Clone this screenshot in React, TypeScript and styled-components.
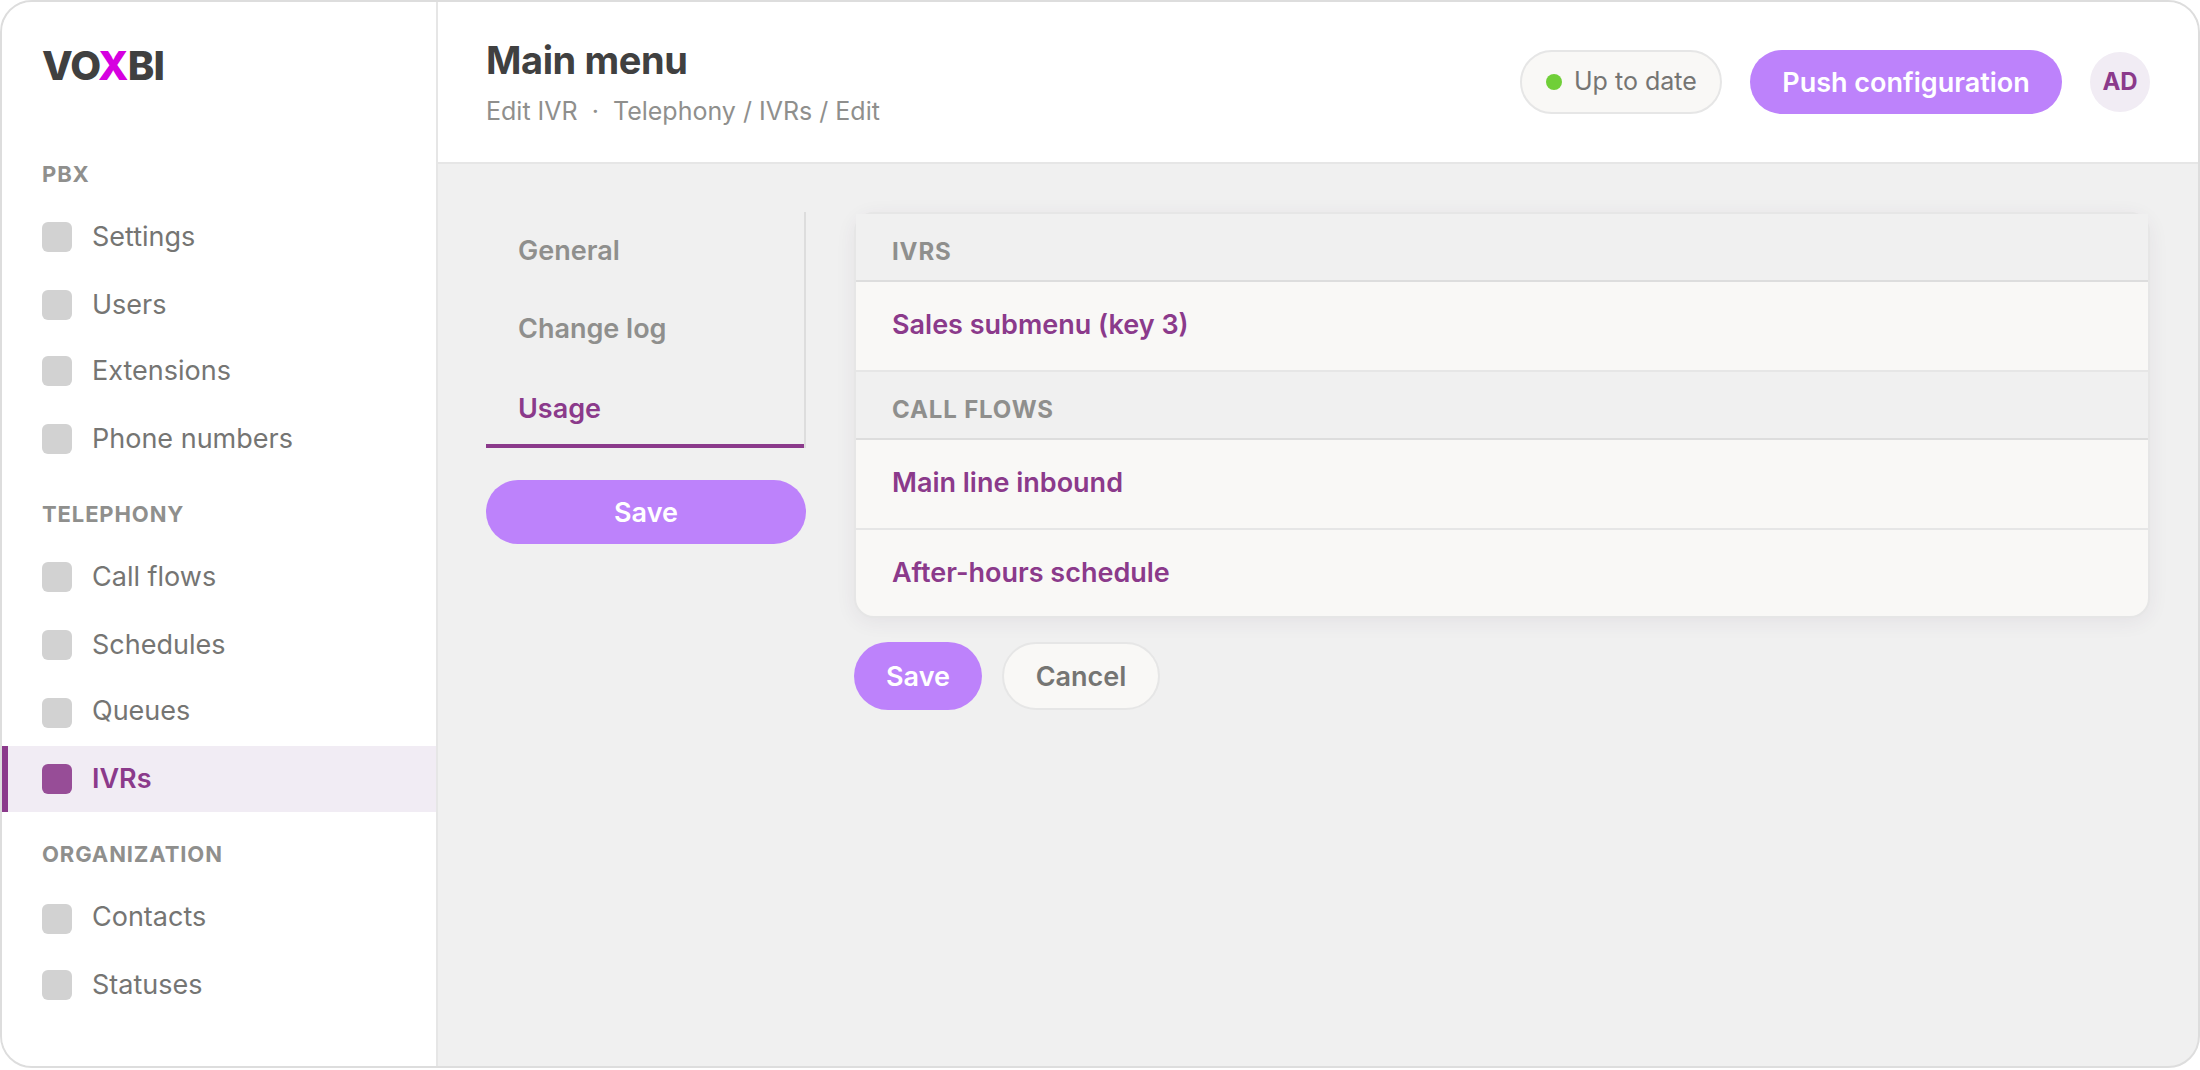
import React from "react";
import styled, { createGlobalStyle, css } from "styled-components";

const color = {
  text: "#404040",
  body: "#757573",
  muted: "#8f8f8d",
  accent: "#8b3a8b",
  accentSoft: "#f1ecf4",
  primary: "#bd82fb",
  magenta: "#d600e0",
  canvas: "#f0f0f0",
  surface: "#f9f8f6",
  line: "#dddddd",
  lineSoft: "#e6e6e6",
  green: "#70cf38",
};

const GlobalStyle = createGlobalStyle`
  *, *::before, *::after { box-sizing: border-box; }
  body {
    margin: 0;
    background: #fff;
    font-family: Inter, "Liberation Sans", sans-serif;
  }
  button { font-family: inherit; }
`;

const Frame = styled.div`
  display: flex;
  width: 2200px;
  height: 1068px;
  border: 2px solid ${color.line};
  border-radius: 32px;
  background: ${color.canvas};
  overflow: hidden;
`;

/* ---------- Sidebar ---------- */

const Sidebar = styled.aside`
  flex: none;
  width: 436px;
  border-right: 2px solid ${color.lineSoft};
  background: #fff;
`;

const Logo = styled.div`
  height: 130px;
  padding: 39px 40px 0;
  font-size: 40px;
  font-weight: 800;
  line-height: 49px;
  letter-spacing: -0.02em;
  color: ${color.text};
`;

const LogoMark = styled.span`
  color: ${color.magenta};
`;

const NavHeading = styled.h2`
  height: 72px;
  margin: 0;
  padding: 29px 40px 0;
  font-size: 22px;
  font-weight: 700;
  line-height: 26px;
  letter-spacing: 0.04em;
  text-transform: uppercase;
  color: ${color.muted};
`;

const NavList = styled.ul`
  margin: 0;
  padding: 0;
  list-style: none;
`;

const NavIcon = styled.span<{ $drop?: boolean }>`
  flex: none;
  width: 30px;
  height: 30px;
  margin-top: ${(p) => (p.$drop ? 20 : 18)}px;
  border-radius: 6px;
  background: #d2d2d2;
`;

const NavItem = styled.li<{ $active?: boolean }>`
  display: flex;
  align-items: flex-start;
  gap: 20px;
  height: 68px;
  padding-left: 40px;
  font-size: 27px;
  line-height: 33px;
  color: ${color.body};

  &:nth-child(even) {
    height: 66px;
  }

  ${(p) =>
    p.$active &&
    css`
      padding-left: 34px;
      border-left: 6px solid ${color.accent};
      background: ${color.accentSoft};
      color: ${color.accent};
      font-weight: 600;

      ${NavIcon} {
        background: #974d97;
      }
    `}
`;

const NavLabel = styled.span`
  padding-top: 16px;
`;

/* ---------- Main column ---------- */

const Main = styled.main`
  flex: 1;
  min-width: 0;
`;

const Header = styled.header`
  display: flex;
  align-items: center;
  justify-content: space-between;
  height: 162px;
  padding: 0 48px;
  border-bottom: 2px solid ${color.lineSoft};
  background: #fff;
`;

const TitleBlock = styled.div`
  align-self: flex-start;
  display: flex;
  flex-direction: column;
  gap: 13px;
  padding-top: 35px;
`;

const Title = styled.h1`
  margin: 0;
  font-size: 38px;
  font-weight: 700;
  line-height: 46px;
  letter-spacing: -0.01em;
  color: ${color.text};
`;

const Crumbs = styled.div`
  font-size: 25px;
  line-height: 30px;
  color: ${color.muted};
`;

const HeaderActions = styled.div`
  display: flex;
  align-items: center;
  gap: 28px;
`;

const StatusPill = styled.div`
  display: flex;
  align-items: center;
  gap: 12px;
  width: 202px;
  height: 64px;
  padding-left: 24px;
  border: 2px solid ${color.lineSoft};
  border-radius: 32px;
  background: ${color.surface};
  font-size: 25px;
  line-height: 30px;
  color: ${color.body};
  white-space: nowrap;

  span {
    padding-bottom: 2px;
  }
`;

const StatusDot = styled.i`
  flex: none;
  width: 16px;
  height: 16px;
  border-radius: 50%;
  background: ${color.green};
`;

const Avatar = styled.div`
  width: 60px;
  height: 60px;
  padding-top: 15px;
  border-radius: 50%;
  background: ${color.accentSoft};
  font-size: 24px;
  font-weight: 700;
  line-height: 29px;
  text-align: center;
  color: ${color.accent};
`;

const Button = styled.button<{ $variant?: "primary" | "ghost"; $tall?: boolean; $width?: string }>`
  flex: none;
  display: block;
  width: ${(p) => p.$width ?? "auto"};
  height: ${(p) => (p.$tall ? 68 : 64)}px;
  padding: ${(p) => (p.$tall ? "18px 0 17px" : "16px 0 15px")};
  border: 0;
  border-radius: 34px;
  background: ${color.primary};
  font-size: 27px;
  font-weight: 600;
  line-height: 33px;
  text-align: center;
  color: #fff;
  white-space: nowrap;

  ${(p) =>
    p.$variant === "ghost" &&
    css`
      padding: 16px 0 15px;
      border: 2px solid ${color.lineSoft};
      background: ${color.surface};
      color: ${color.body};
    `}
`;

const Content = styled.div`
  display: grid;
  grid-template-columns: 320px 1fr;
  gap: 48px;
  align-items: start;
  padding: 48px;
`;

const SideColumn = styled.div`
  display: flex;
  flex-direction: column;
  gap: 32px;
`;

const Tabs = styled.nav`
  display: flex;
  flex-direction: column;
  border-right: 2px solid ${color.line};
`;

const Tab = styled.a<{ $active?: boolean }>`
  height: 78px;
  padding: 22px 32px 0;
  font-size: 27px;
  font-weight: 600;
  line-height: 33px;
  color: ${color.muted};

  &:nth-child(2) {
    height: 80px;
  }

  ${(p) =>
    p.$active &&
    css`
      border-bottom: 4px solid ${color.accent};
      color: ${color.accent};
    `}
`;

const Card = styled.section`
  border: 2px solid ${color.lineSoft};
  border-radius: 20px;
  background: ${color.surface};
  box-shadow: 0 4px 20px rgba(70, 40, 90, 0.07);
`;

const CardHeading = styled.h3`
  height: 68px;
  margin: 0;
  padding: 23px 36px 0;
  border-bottom: 2px solid ${color.line};
  background: ${color.canvas};
  font-size: 24px;
  font-weight: 700;
  line-height: 29px;
  letter-spacing: 0.036em;
  text-transform: uppercase;
  color: ${color.muted};
`;

const CardRow = styled.div`
  height: 90px;
  padding: 26px 36px 0;
  border-bottom: 2px solid ${color.lineSoft};
  font-size: 27px;
  font-weight: 600;
  line-height: 33px;
  color: ${color.accent};

  &:last-child {
    height: 86px;
    border-bottom: 0;
  }
`;

const FormActions = styled.div`
  display: flex;
  gap: 20px;
  margin-top: 24px;
`;

/* ---------- Data ---------- */

type Item = { label: string; active?: boolean; drop?: boolean };

const navGroups: { title: string; items: Item[] }[] = [
  {
    title: "PBX",
    items: [{ label: "Settings" }, { label: "Users" }, { label: "Extensions" }, { label: "Phone numbers" }],
  },
  {
    title: "Telephony",
    items: [
      { label: "Call flows" },
      { label: "Schedules" },
      { label: "Queues", drop: true },
      { label: "IVRs", active: true },
    ],
  },
  {
    title: "Organization",
    items: [{ label: "Contacts", drop: true }, { label: "Statuses" }],
  },
];

const tabs = ["General", "Change log", "Usage"];

const usage = [
  { title: "IVRs", links: ["Sales submenu (key 3)"] },
  { title: "Call flows", links: ["Main line inbound", "After-hours schedule"] },
];

export default function App() {
  return (
    <>
      <GlobalStyle />
      <Frame>
        <Sidebar>
          <Logo>
            VO<LogoMark>X</LogoMark>BI
          </Logo>
          {navGroups.map((group) => (
            <React.Fragment key={group.title}>
              <NavHeading>{group.title}</NavHeading>
              <NavList>
                {group.items.map((item) => (
                  <NavItem key={item.label} $active={item.active}>
                    <NavIcon $drop={item.drop} />
                    <NavLabel>{item.label}</NavLabel>
                  </NavItem>
                ))}
              </NavList>
            </React.Fragment>
          ))}
        </Sidebar>

        <Main>
          <Header>
            <TitleBlock>
              <Title>Main menu</Title>
              <Crumbs>Edit IVR &nbsp;·&nbsp; Telephony / IVRs / Edit</Crumbs>
            </TitleBlock>
            <HeaderActions>
              <StatusPill>
                <StatusDot />
                <span>Up to date</span>
              </StatusPill>
              <Button $width="312px">Push configuration</Button>
              <Avatar>AD</Avatar>
            </HeaderActions>
          </Header>

          <Content>
            <SideColumn>
              <Tabs>
                {tabs.map((tab) => (
                  <Tab key={tab} $active={tab === "Usage"}>
                    {tab}
                  </Tab>
                ))}
              </Tabs>
              <Button $width="100%">Save</Button>
            </SideColumn>

            <div>
              <Card>
                {usage.map((section) => (
                  <React.Fragment key={section.title}>
                    <CardHeading>{section.title}</CardHeading>
                    {section.links.map((link) => (
                      <CardRow key={link}>{link}</CardRow>
                    ))}
                  </React.Fragment>
                ))}
              </Card>
              <FormActions>
                <Button $tall $width="128px">
                  Save
                </Button>
                <Button $tall $variant="ghost" $width="158px">
                  Cancel
                </Button>
              </FormActions>
            </div>
          </Content>
        </Main>
      </Frame>
    </>
  );
}
